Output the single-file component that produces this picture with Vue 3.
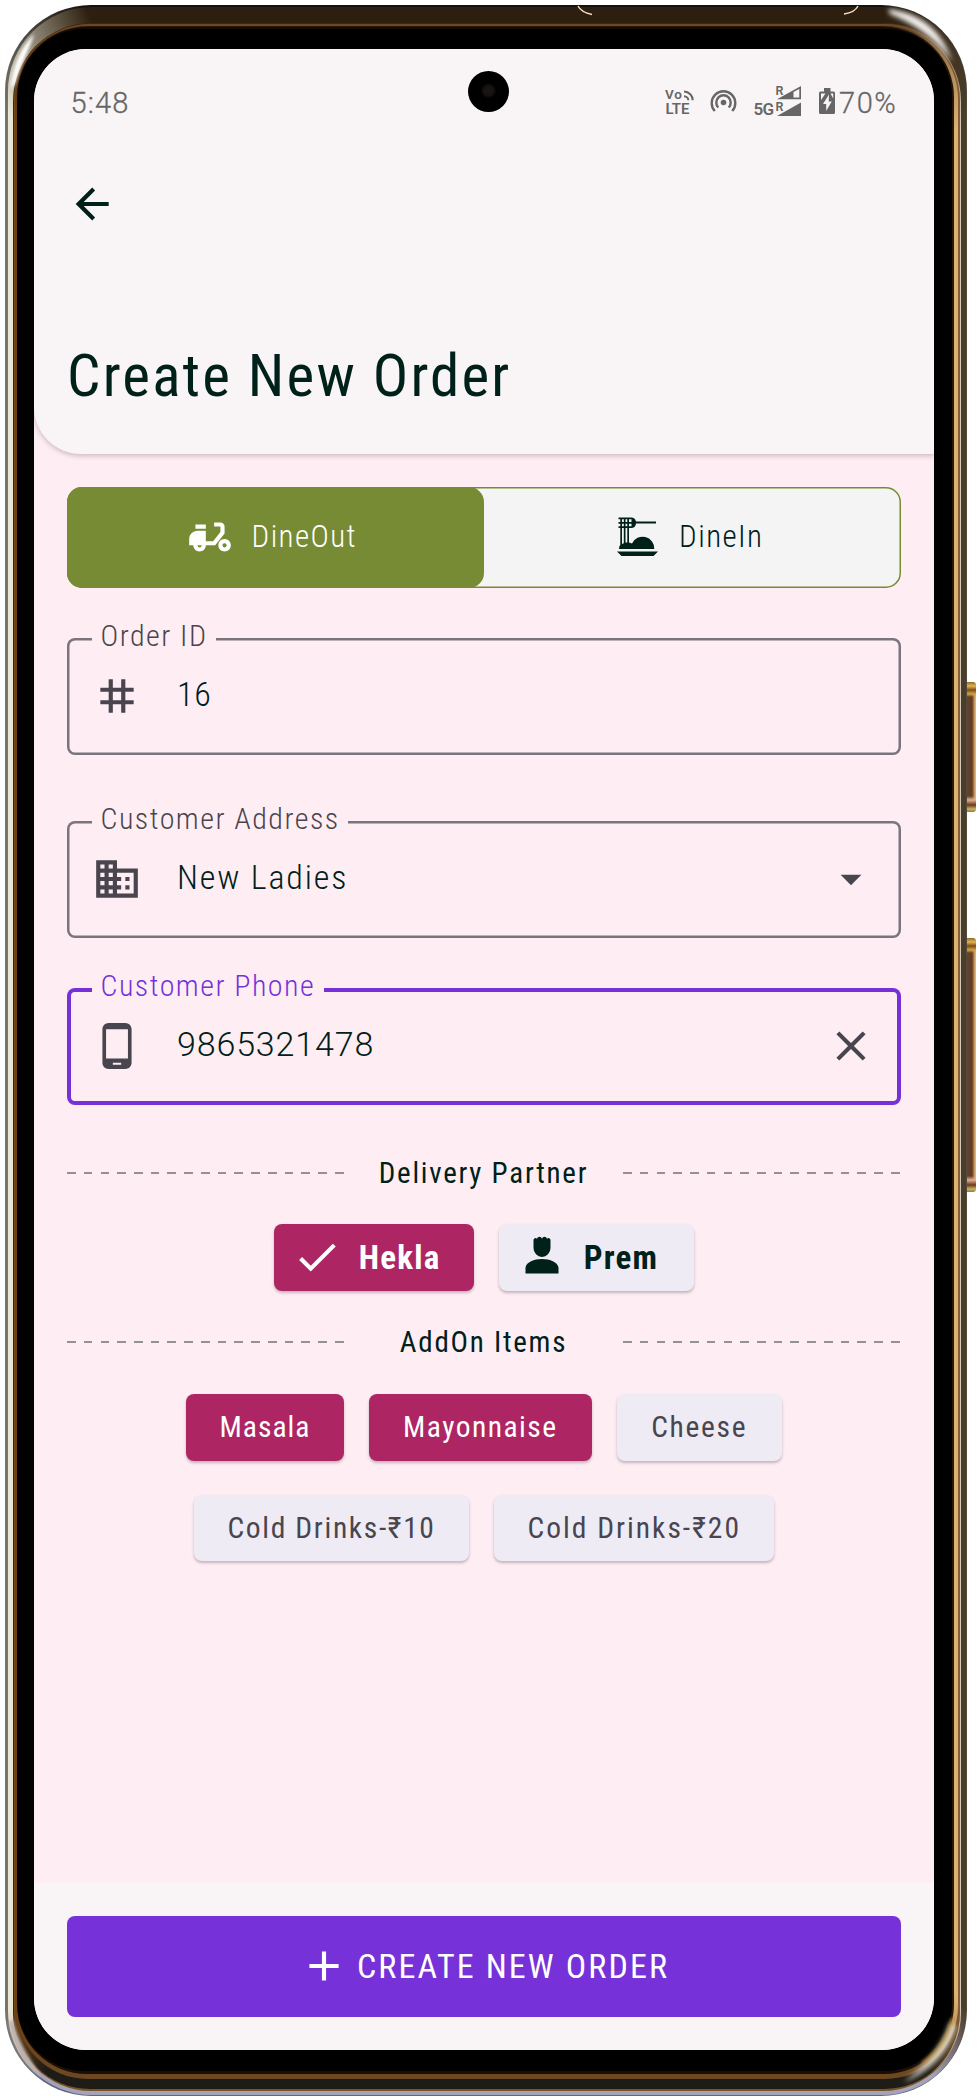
<script setup>
import { ref } from 'vue'

const bezel = [
  { l: 0, t: 0, r: 0, b: 0, rad: 86, c: ['#15110c', '#544a3c', '#66667a', '#77746c'] },
  { l: 3, t: 1.5, r: 1.5, b: 1.5, rad: 84, c: ['#2c1f0f', '#4a3d2b', '#a3a3ba', '#eae6d4'] },
  { l: 7.5, t: 17.5, r: 6, b: 5, rad: 78, c: ['#3b2611', '#d5cbb8', '#7a5228', '#352512'] },
  { l: 8.5, t: 18.5, r: 7.5, b: 7.5, rad: 76, c: ['#6e4720', '#8b5f30', '#1e1c16', '#77491a'] },
  { l: 9.5, t: 20.5, r: 9, b: 17.5, rad: 73, c: ['#2a1a08', '#dcb377', '#6d4722', '#6b3f12'] },
  { l: 12, t: 22, r: 13.5, b: 22, rad: 70, c: ['#140c04', '#2a1708', '#1a0f04', '#080401'] },
  { l: 12.5, t: 24, r: 15.5, b: 25, rad: 67, c: ['#000', '#000', '#000', '#000'] },
]

function layerStyle(p) {
  const [t, r, b, l] = p.c
  return {
    inset: `${p.t}px ${p.r}px ${p.b}px ${p.l}px`,
    borderRadius: `${p.rad}px`,
    background: `conic-gradient(${t} 0deg 21deg, ${r} 27deg 153.5deg, ${b} 156.5deg 203.5deg, ${l} 206.5deg 333deg, ${t} 339deg 360deg)`,
  }
}

const mode = ref('out')
const ICONS = {
  hash: 'M20 10V8h-4V4h-2v4h-4V4H8v4H4v2h4v4H4v2h4v4h2v-4h4v4h2v-4h4v-2h-4v-4h4zm-6 4h-4v-4h4v4z',
  building: 'M12 7V3H2v18h20V7H12zM6 19H4v-2h2v2zm0-4H4v-2h2v2zm0-4H4V9h2v2zm0-4H4V5h2v2zm4 12H8v-2h2v2zm0-4H8v-2h2v2zm0-4H8V9h2v2zm0-4H8V5h2v2zm10 12h-8v-2h2v-2h-2v-2h2v-2h-2V9h8v10zm-2-8h-2v2h2v-2zm0 4h-2v2h2v-2z',
  phone: 'M16 1H8C6.34 1 5 2.34 5 4v16c0 1.66 1.34 3 3 3h8c1.66 0 3-1.34 3-3V4c0-1.66-1.34-3-3-3zm-2 20h-4v-1h4v1zm3.25-3H6.75V4h10.5v14z',
  down: 'M7 10l5 5 5-5z',
  close: 'M19 6.41L17.59 5 12 10.59 6.41 5 5 6.41 10.59 12 5 17.59 6.41 19 12 13.41 17.59 19 19 17.59 13.41 12z',
}
const fields = [
  { id: 'order', label: 'Order ID', value: '16', icon: 'hash' },
  { id: 'address', label: 'Customer Address', value: 'New Ladies', icon: 'building', end: 'down' },
  { id: 'contact', label: 'Customer Phone', value: '9865321478', icon: 'phone', end: 'close' },
]
const addons = [
  [
    { name: 'Masala', on: true, cls: 'c-masala' },
    { name: 'Mayonnaise', on: true, cls: 'c-mayo' },
    { name: 'Cheese', on: false, cls: 'c-cheese' },
  ],
  [
    { name: 'Cold Drinks-₹10', on: false, cls: 'c-ten' },
    { name: 'Cold Drinks-₹20', on: false, cls: 'c-twenty' },
  ],
]
</script>

<template>
  <div class="stage">
    <i class="key key-power"></i>
    <i class="key key-volume"></i>
    <div class="frame">
      <i v-for="(p, i) in bezel" :key="i" class="layer" :style="layerStyle(p)"></i>
      <svg class="shine" viewBox="5 5 962 2091">
        <defs>
          <filter id="soft" x="-20%" y="-20%" width="140%" height="140%"><feGaussianBlur stdDeviation="1.5" /></filter>
          <filter id="softer" x="-20%" y="-20%" width="140%" height="140%"><feGaussianBlur stdDeviation="2.5" /></filter>
        </defs>
        <path d="M11 88C13 66 20 48 34 34C31 46 22 60 15 84Z" fill="#fff" filter="url(#soft)" />
        <path d="M888 9C922 13 943 32 952 62C940 44 920 26 890 14Z" fill="#f4f0ee" filter="url(#softer)" />
        <path d="M858 6C856 10 851 13 844 14" fill="none" stroke="#f7dcc0" stroke-width="1.5" />
        <path d="M578 6C580 10 585 13 592 14.500" fill="none" stroke="#f7dcc0" stroke-width="1.500" />
        <path d="M956 2026C950 2048 934 2070 904 2082C924 2066 942 2048 950 2022Z" fill="#d8d4c8" filter="url(#softer)" />
        <path d="M952 2018C948 2038 938 2052 922 2063" fill="none" stroke="#b88a2c" stroke-width="2" filter="url(#soft)" />
        <path d="M9 2022C13 2046 24 2064 40 2076C36 2066 20 2048 13 2020Z" fill="#bdb0a8" filter="url(#soft)" />
      </svg>
    </div>

    <main class="screen">
      <header class="header">
        <div class="status">
          <span class="time">5:48</span>
          <svg class="signals" width="174" height="34" viewBox="664 84 174 34">
            <g class="tiny">
              <text x="665" y="99" font-size="13.500" textLength="17">Vo</text>
              <text x="665.500" y="114" font-size="15" textLength="24">LTE</text>
              <text x="753.500" y="115" font-size="17" textLength="20.500">5G</text>
              <text x="775.500" y="94.500" font-size="12.500">R</text>
              <text x="775.500" y="111" font-size="12.500">R</text>
            </g>
            <g fill="none" stroke="#666" stroke-width="2">
              <path d="M684 91.500a9 8.500 0 0 1 8.700 8.800M684 96.300a4.500 4 0 0 1 4.300 4" />
              <path stroke-width="2.400" d="M714.800 111a11.800 11.800 0 1 1 17.400 0M718.300 107.500a7.200 7.200 0 1 1 10.400 0" />
            </g>
            <g fill="#666">
              <circle cx="723.500" cy="102.500" r="2.800" />
              <path fill-rule="evenodd" d="M777 99.200L801 86V99.200ZM793.500 92V97.500H799.300V89Z" />
              <path d="M777 116L801 102.500V116Z" />
              <path fill-rule="evenodd" d="M824 88h6.500v3.500h3a1.500 1.500 0 0 1 1.500 1.500v19.500a1.500 1.500 0 0 1-1.500 1.500H820.500a1.500 1.500 0 0 1-1.500-1.500V93a1.500 1.500 0 0 1 1.500-1.500H824ZM829 94.500l-6 9.500h3.200v7l5.500-9.500h-3Z" />
              <path d="M821 93.500h4.500L821 100ZM830.500 93.500h2.700v5Z" fill="#f9f5f6" />
            </g>
          </svg>
          <span class="battery">70%</span>
        </div>
        <div class="bar">
          <svg class="icon" viewBox="0 0 24 24"><path d="M20 11V13H8L13.500 18.500L12.080 19.920L4.160 12L12.080 4.080L13.500 5.500L8 11H20Z" /></svg>
        </div>
        <h1>Create New Order</h1>
      </header>

      <section class="content">
        <div class="toggle">
          <button class="seg" :class="{ active: mode === 'out' }" @click="mode = 'out'">
            <svg class="icon" viewBox="0 0 24 24"><path d="M19 15c.55 0 1 .45 1 1s-.45 1-1 1-1-.45-1-1 .45-1 1-1m0-2c-1.660 0-3 1.340-3 3s1.340 3 3 3 3-1.340 3-3-1.340-3-3-3m-9-7H5v2h5V6m7-1h-3v2h3v2.650L13.500 14H10V9H6c-2.210 0-4 1.790-4 4v3h2c0 1.660 1.340 3 3 3s3-1.340 3-3h4.500L19 10.350V7a2 2 0 0 0-2-2M7 17c-.55 0-1-.45-1-1h2c0 .55-.45 1-1 1z" /></svg>
            <span>DineOut</span>
          </button>
          <button class="seg" :class="{ active: mode === 'in' }" @click="mode = 'in'">
            <svg class="icon" viewBox="0 0 50 50">
              <path d="M5.500 5.500H18a5 5.200 0 0 1 5 4H43v2H23a5 5.200 0 0 1-5 4.500H5.500v-1.700H7.300V11.800H5.500V9.900H7.300V7.200H5.500ZM9 7.200v2.700h1.800V7.200ZM12.500 7.200v2.700h1.800V7.200ZM16 7.200v2.700h2.500V7.200ZM9 11.800v2.500h1.800v-2.500ZM12.500 11.800v2.500h1.800v-2.500ZM16 11.800v2.500h2.500v-2.500Z" fill-rule="evenodd" />
              <path d="M7.300 15h1.700v17l1.800-.8V15h1.700v15.500H14.300V15H16v15.500l3 1a11.700 11.700 0 0 1 22.300 5.500H6q0-3 1.300-4ZM4 39.500H45L40.500 44h-32Z" />
            </svg>
            <span>DineIn</span>
          </button>
        </div>

        <div v-for="f in fields" :key="f.id" class="field" :class="f.id">
          <label>{{ f.label }}</label>
          <svg class="icon" viewBox="0 0 24 24"><path :d="ICONS[f.icon]" /></svg>
          <span class="value">{{ f.value }}</span>
          <svg v-if="f.end" class="icon end" viewBox="0 0 24 24"><path :d="ICONS[f.end]" /></svg>
        </div>

        <div class="divider first"><i></i><span>Delivery Partner</span><i></i></div>
        <div class="chips people">
          <button class="chip person on">
            <svg class="icon" viewBox="0 0 24 24"><path d="M9 16.170L4.830 12l-1.420 1.410L9 19 21 7l-1.410-1.410z" /></svg>
            <span>Hekla</span>
          </button>
          <button class="chip person prem">
            <svg class="icon" viewBox="0 0 50 50"><path d="M16.500 8a2 2 0 0 1 3.500-1.300a2.600 2.600 0 0 1 5 0a2.600 2.600 0 0 1 5 0A2 2 0 0 1 33.500 8V16a8.500 9 0 0 1-17 0ZM8.500 41.500V35.500C9.500 30 17 27 25 27S40.500 30 41.500 35.500v6Z" /></svg>
            <span>Prem</span>
          </button>
        </div>

        <div class="divider"><i></i><span>AddOn Items</span><i></i></div>
        <div v-for="(row, i) in addons" :key="i" class="chips" :class="'row' + i">
          <button v-for="a in row" :key="a.name" class="chip" :class="[a.cls, { on: a.on }]">{{ a.name }}</button>
        </div>
      </section>

      <footer class="footer">
        <button class="cta">
          <svg class="icon" viewBox="0 0 24 24"><path d="M19 13h-6v6h-2v-6H5v-2h6V5h2v6h6v2z" /></svg>
          <span>CREATE NEW ORDER</span>
        </button>
      </footer>
      <i class="camera"></i>
    </main>
  </div>
</template>

<style>
body { background: #fff; }
</style>

<style scoped>
* { box-sizing: border-box; }
.stage {
  position: relative;
  width: 978px;
  height: 2100px;
  padding: 49px 0 0 34px;
  overflow: hidden;
  font-family: Roboto, "Liberation Sans", sans-serif;
  font-stretch: 75%;
  color: #00201a;
  white-space: nowrap;
}
button {
  border: 0;
  padding: 0;
  background: none;
  font: inherit;
  font-stretch: 75%;
  color: inherit;
  white-space: nowrap;
}
.icon { width: 50px; height: 50px; flex: none; display: block; fill: currentColor; }

.frame { position: absolute; left: 5px; top: 5px; width: 962px; height: 2091px; }
.layer { position: absolute; }
.shine { position: absolute; left: 0; top: 0; width: 962px; height: 2091px; }
.key {
  position: absolute;
  left: 961px;
  width: 15px;
  border-radius: 3px;
  background:
    linear-gradient(#8a6a2c 0, #e2b552 4px, #7b4d14 8px, #d8a24a 12px, transparent 15px, transparent calc(100% - 16px), #e0b090 calc(100% - 12px), #6b3a1c calc(100% - 7px), #cdb160 calc(100% - 3px), #8b7a50 100%),
    linear-gradient(90deg, #c48a32 0, #d9963c 3px, #6b452a 4px, #5d3c28 11px, #b98440 13px, #d9c7ae 15px);
}
.key-power { top: 682px; height: 130px; }
.key-volume { top: 938px; height: 254px; }

.screen {
  position: relative;
  width: 900px;
  height: 2001px;
  border-radius: 52px;
  overflow: hidden;
  background: #feeef3;
  display: flex;
  flex-direction: column;
}
.camera {
  position: absolute;
  left: 433.500px;
  top: 21.500px;
  width: 41px;
  height: 41px;
  border-radius: 50%;
  background: radial-gradient(circle at 50% 48%, #1c1410 0, #151313 5px, #050505 7px, #000 8px);
}

.header {
  flex: none;
  height: 405px;
  background: #f9f5f6;
  border-bottom-left-radius: 47px;
  box-shadow: 0 2px 5px rgba(60, 20, 40, .24);
}
.status {
  height: 107px;
  padding: 0 34px 0 36.500px;
  display: flex;
  align-items: center;
  color: #666;
  font-size: 29px;
  font-weight: 300;
  font-stretch: 100%;
  letter-spacing: 1.200px;
  -webkit-text-stroke: .3px #666;
}
.signals { margin: -4px 0 0 auto; }
.tiny { font-weight: 600; letter-spacing: 0; fill: #666; -webkit-text-stroke: 0; }
.battery { width: 62px; padding-left: 1px; letter-spacing: 1.600px; }
.bar { height: 96px; padding: 22.500px 0 0 33px; }
h1 {
  margin: 94px 0 0 33px;
  font-size: 59px;
  line-height: 60px;
  font-weight: 400;
  letter-spacing: 2.200px;
}

.content { flex: 1; padding: 33px 33px 0; }
.toggle {
  display: flex;
  height: 100.500px;
  border-radius: 15px;
  background: #f4f4f4;
  box-shadow: inset 0 0 0 1.500px #778b35;
}
.seg {
  width: 50%;
  border-radius: 15px;
  display: flex;
  align-items: center;
  justify-content: center;
  gap: 16.500px;
  padding-right: 9px;
  font-size: 31px;
  font-weight: 300;
  letter-spacing: 1.400px;
}
.seg.active { background: #778b35; color: #fff; }
.seg span { margin-top: -2px; }

.field {
  position: relative;
  height: 116.500px;
  margin-top: 50.500px;
  padding: 0 25px;
  display: flex;
  align-items: center;
  border-radius: 8px;
  box-shadow: inset 0 0 0 2.500px #79747e;
  color: #49454f;
}
.field.address { margin-top: 66.500px; }
.field.contact { box-shadow: inset 0 0 0 4px #7632d8; }
.field.contact label { color: #7632d8; }
label {
  position: absolute;
  left: 25px;
  top: -17px;
  height: 30px;
  line-height: 30px;
  padding: 0 8.500px;
  background: #feeef3;
  font-size: 30px;
  font-weight: 300;
  letter-spacing: 1.480px;
}
.value {
  margin: -4px 0 0 35px;
  color: #00201a;
  font-size: 34px;
  font-weight: 300;
  letter-spacing: 1.850px;
}
.order .value { letter-spacing: .6px; }
.contact .value { font-stretch: 100%; letter-spacing: .85px; }
.end { margin-left: auto; }

.divider {
  margin-top: 36.500px;
  height: 30px;
  display: flex;
  align-items: center;
  justify-content: space-between;
  font-size: 29px;
  line-height: 30px;
  font-weight: 400;
  letter-spacing: 1.750px;
}
.divider.first { margin-top: 53px; }
.divider i {
  width: 277px;
  height: 2px;
  background: repeating-linear-gradient(90deg, #929292 0 8.700px, transparent 8.700px 16.750px);
}
.divider i:last-child { width: 278px; }

.chips { display: flex; justify-content: center; gap: 25px; margin-top: 37px; }
.people { margin-top: 36.500px; }
.row1 { margin-top: 34px; }
.chip {
  height: 66.500px;
  border-radius: 8px;
  background: #eeebf5;
  color: #49454f;
  box-shadow: 0 2px 3px rgba(70, 40, 60, .3);
  font-size: 29.500px;
  font-weight: 400;
  letter-spacing: 1px;
}
.chip.on { background: #ae2563; color: #fff; }
.person {
  display: flex;
  align-items: center;
  width: 200px;
  padding-left: 17.500px;
  gap: 17px;
  color: #00201a;
  font-size: 33px;
  font-weight: 700;
  letter-spacing: 1.200px;
}
.prem { width: 194.500px; }
.c-masala { width: 157.500px; }
.c-mayo { width: 223px; letter-spacing: 1.450px; }
.c-cheese { width: 165px; letter-spacing: 1.700px; }
.c-ten { width: 275.500px; letter-spacing: 1.650px; }
.c-twenty { width: 280px; letter-spacing: 2px; }

.footer { flex: none; height: 167.500px; padding: 33.500px 33px; background: #f9f5f6; }
.cta {
  display: flex;
  align-items: center;
  justify-content: center;
  gap: 8px;
  width: 834px;
  height: 100.500px;
  border-radius: 8px;
  background: #7632d8;
  color: #fff;
  font-size: 34px;
  font-weight: 400;
  letter-spacing: 2.100px;
}
</style>
